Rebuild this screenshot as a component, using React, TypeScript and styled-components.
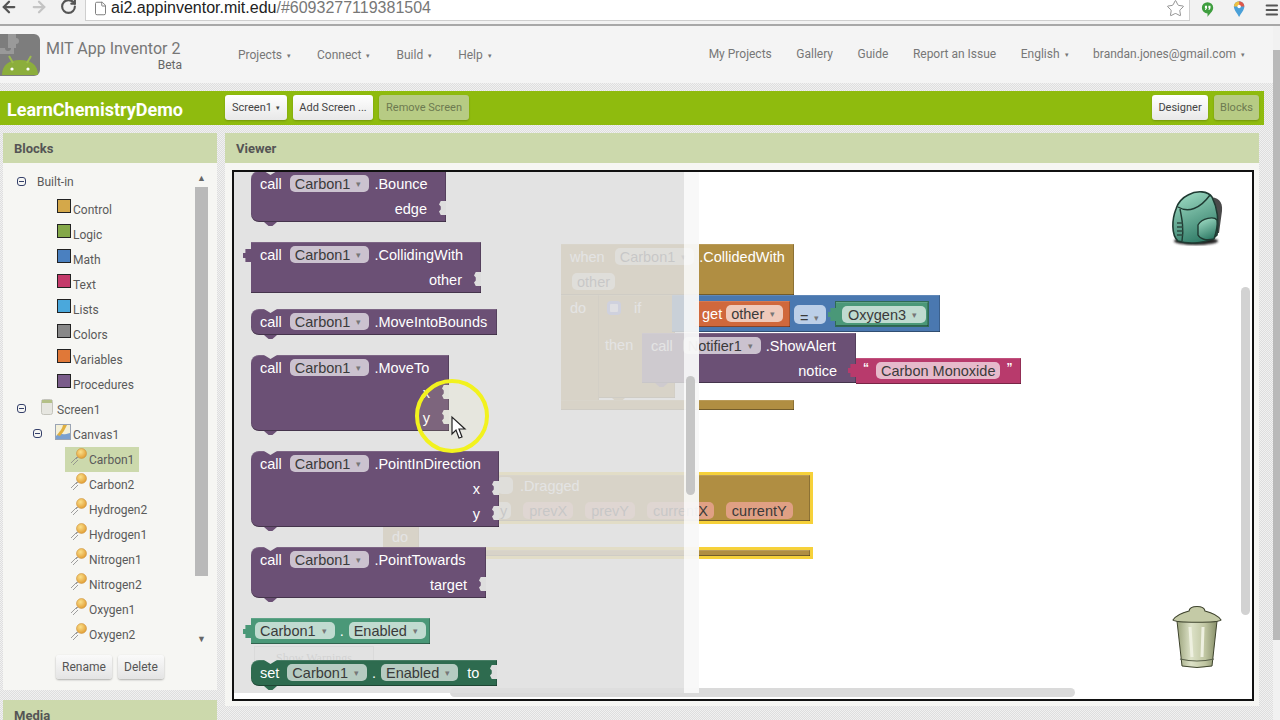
import * as React from "react";
import styled, { createGlobalStyle, css } from "styled-components";
import { ArrowLeft, ArrowRight, File, Menu, RotateCw, Star } from "lucide-react";

const dots = css`
  background: repeating-conic-gradient(#dedede 0 25%, #f1f1f1 0 50%) 0 0 / 2px 2px;
`;

const GlobalStyle = createGlobalStyle`
  html, body {
    margin: 0;
    padding: 0;
    overflow: hidden;
    font-family: Roboto, "Liberation Sans", sans-serif;
  }
`;

const Root = styled.div`
  width: 1280px;
  height: 720px;
  overflow: hidden;
  display: flex;
  flex-direction: column;
`;

/* browser chrome */
const BrowserBar = styled.div`
  height: 26px;
  flex: none;
  box-sizing: border-box;
  display: flex;
  align-items: flex-start;
  overflow: hidden;
  background: #f2f2f2;
  border-bottom: 2px solid #a8a8a8;
`;

const NavIcons = styled.div`
  width: 85px;
  flex: none;
  display: flex;
  gap: 12px;
  margin-top: -2px;
  color: #555;

  svg:nth-child(2) {
    color: #c4c4c4;
  }
`;

const UrlBox = styled.div`
  width: 1105px;
  height: 21px;
  flex: none;
  box-sizing: border-box;
  display: flex;
  align-items: center;
  background: #fff;
  border: 1px solid #cfcfcf;
  border-top: none;
  padding: 0 4px 4px 7px;
  font: 16px/14px "Liberation Sans", Arial, sans-serif;
  color: #222;

  span {
    color: #777;
  }
`;

const PageIcon = styled.div`
  display: flex;
  margin-right: 3px;
  color: #777;
`;

const StarWrap = styled.div`
  display: flex;
  margin-left: auto;
  color: #777;
`;

const ExtIcons = styled.div`
  flex: 1;
  display: flex;
  align-items: center;
  gap: 19px;
  padding-left: 11px;
  overflow: hidden;
`;

const Page = styled.div`
  flex: 1;
  min-height: 0;
  display: flex;
`;

const Content = styled.div`
  width: 1273px;
  flex: none;
  ${dots}
`;

const PageScroll = styled.div`
  width: 7px;
  flex: none;
  background: #f1f1f1;
  padding-top: 24px;
  box-sizing: border-box;

  div {
    height: 590px;
    background: #b9b9b9;
  }
`;

/* top nav */
const Header = styled.div`
  height: 57px;
  display: flex;
  align-items: center;
  background: #f4f4f4;
  margin-bottom: 8px;
  font-size: 12px;
  color: #777;
`;

const Brand = styled.div`
  width: 238px;
  flex: none;
  display: flex;
  align-items: center;
  gap: 6px;
`;

const BrandText = styled.div`
  width: 136px;
  display: flex;
  flex-direction: column;
  font-size: 16px;
  line-height: 18px;
  margin-top: 2px;

  small {
    font-size: 12px;
    line-height: 14px;
    text-align: right;
    color: #666;
  }
`;

const NavGroup = styled.div<{ $right?: boolean }>`
  display: flex;
  gap: ${(p) => (p.$right ? 24.5 : 26)}px;
  ${(p) => (p.$right ? "margin-left: auto; padding-right: 28px; margin-top: -2px;" : "")}
`;

const NavItem = styled.span<{ $menu?: boolean }>`
  white-space: nowrap;
  ${(p) =>
    p.$menu
      ? css`
          &::after {
            content: "▾";
            font-size: 7px;
            margin-left: 5px;
            vertical-align: 1px;
          }
        `
      : ""}
`;

/* green toolbar */
const Toolbar = styled.div`
  width: 1264px;
  height: 34px;
  box-sizing: border-box;
  display: flex;
  align-items: center;
  gap: 6px;
  padding-right: 5px;
  background: #8fbb0e;
  margin-bottom: 8px;
`;

const ProjectName = styled.div`
  width: 212px;
  padding: 2px 0 0 7px;
  flex: none;
  font-size: 18px;
  font-weight: 700;
  color: #fff;
`;

const ToolButton = styled.div<{ $off?: boolean; $w: number; $menu?: boolean }>`
  width: ${(p) => p.$w}px;
  height: 25px;
  margin-top: -1px;
  flex: none;
  box-sizing: border-box;
  display: flex;
  align-items: center;
  justify-content: center;
  border-radius: 3px;
  font-size: 11px;
  color: ${(p) => (p.$off ? "#6d7a50" : "#444")};
  background: ${(p) => (p.$off ? "#b7cb84" : "linear-gradient(#fff, #e8e8e8)")};
  box-shadow: 0 1px 2px rgba(0, 0, 0, 0.2);
  ${(p) =>
    p.$menu
      ? css`
          &::after {
            content: "▾";
            font-size: 7px;
            margin-left: 4px;
          }
        `
      : ""}
`;

const ToolSpacer = styled.div`
  flex: 1;
`;

/* panels */
const Panels = styled.div`
  display: flex;
  gap: 8px;
  padding-left: 3px;
`;

const LeftColumn = styled.div`
  width: 214px;
  flex: none;
  display: flex;
  flex-direction: column;
`;

const PanelTitle = styled.div`
  height: 30px;
  box-sizing: border-box;
  display: flex;
  align-items: center;
  padding-left: 11px;
  background: #ccd9ac;
  font-size: 13px;
  font-weight: 700;
  color: #555;
`;

const BlocksBody = styled.div`
  height: 527px;
  box-sizing: border-box;
  padding-top: 6px;
  background: #f6f6f3;
  display: flex;
  flex-direction: column;
`;

const TreeWrap = styled.div`
  height: 479px;
  flex: none;
  display: flex;
  padding-right: 9px;
`;

const Tree = styled.div`
  flex: 1;
  overflow: hidden;
`;

const TreeRow = styled.div<{ $indent: number; $tall?: boolean }>`
  height: ${(p) => (p.$tall ? 28 : 25)}px;
  display: flex;
  align-items: ${(p) => (p.$tall ? "flex-start" : "center")};
  padding-left: ${(p) => p.$indent}px;
  font-size: 12px;
  color: #5a5a5a;
  white-space: nowrap;
  ${(p) => (p.$tall ? "line-height: 27px;" : "")}
`;

const Toggle = styled.div<{ $gap: number; $top?: number }>`
  width: 9px;
  height: 9px;
  flex: none;
  box-sizing: border-box;
  border: 1px solid #35406a;
  border-radius: 3px;
  margin-right: ${(p) => p.$gap}px;
  margin-top: ${(p) => p.$top ?? 0}px;
  display: flex;
  align-items: center;
  justify-content: center;

  &::after {
    content: "";
    width: 5px;
    height: 1px;
    background: #35406a;
  }
`;

const Swatch = styled.div<{ $c: string }>`
  width: 14px;
  height: 14px;
  flex: none;
  box-sizing: border-box;
  border: 1px solid #222;
  background: ${(p) => p.$c};
  margin: -7px 2px 0 0;
`;

const TreeIcon = styled.svg<{ $gap: number }>`
  flex: none;
  margin-right: ${(p) => p.$gap}px;
  margin-top: -6px;
`;

const BallRow = styled.div<{ $on?: boolean }>`
  height: 25px;
  display: flex;
  align-items: center;
  padding: 0 5px;
  background: ${(p) => (p.$on ? "#ccd9ac" : "transparent")};
`;

const TreeScroll = styled.div`
  width: 13px;
  flex: none;
  display: flex;
  flex-direction: column;
  align-items: center;
  color: #666;
  font-size: 9px;
  line-height: 18px;
`;

const TreeThumb = styled.div`
  width: 13px;
  height: 389px;
  flex: none;
  background: #b9b9b9;
  margin-bottom: 54px;
`;

const BlockButtons = styled.div`
  display: flex;
  justify-content: center;
  gap: 6px;
  margin-top: 7px;
`;

const SmallButton = styled.div<{ $w: number }>`
  width: ${(p) => p.$w}px;
  height: 24px;
  display: flex;
  align-items: center;
  justify-content: center;
  border-radius: 3px;
  font-size: 12px;
  color: #555;
  background: linear-gradient(#fafafa, #e4e4e4);
  box-shadow: 0 1px 2px rgba(0, 0, 0, 0.3);
`;

const MediaPanel = styled.div`
  margin-top: 10px;
`;

const ViewerColumn = styled.div`
  width: 1034px;
  flex: none;
`;

const ViewerBody = styled.div`
  background: #f6f6f3;
  padding: 7px 5px 5px 7px;
`;

/* blocks workspace */
const Workspace = styled.div`
  position: relative;
  width: 1022px;
  height: 531px;
  box-sizing: border-box;
  border: 2px solid #111;
  background: #fff;
  overflow: hidden;
  font: 14.5px "Liberation Sans", Arial, sans-serif;
  color: #fff;
`;

const OX = 234;
const OY = 172;

const Block = styled.div<{
  $x: number;
  $y: number;
  $w: number;
  $h: number;
  $c: string;
  $notch?: boolean;
  $bump?: boolean;
  $selected?: boolean;
  $round?: boolean;
  $outline?: boolean;
}>`
  position: absolute;
  left: ${(p) => p.$x - OX}px;
  top: ${(p) => p.$y - OY}px;
  width: ${(p) => p.$w}px;
  height: ${(p) => p.$h}px;
  box-sizing: border-box;
  background: ${(p) => p.$c};
  box-shadow: inset 0 1px rgba(255, 255, 255, 0.12), inset 0 -1px rgba(0, 0, 0, 0.35),
    inset -1px 0 rgba(0, 0, 0, 0.2);
  ${(p) => (p.$notch ? "border-radius: 8px 0 0 8px;" : "")}
  ${(p) => (p.$round ? "border-radius: 5px; box-shadow: none;" : "")}
  ${(p) => (p.$outline ? "border: 1px solid #2f6a54;" : "")}
  ${(p) => (p.$selected ? "border: 3px solid #f6d13a; & > div:first-child { margin-top: -2px; }" : "")}

  ${(p) =>
    p.$notch
      ? css`
          &::before {
            content: "";
            position: absolute;
            left: 13px;
            top: 0;
            width: 13px;
            height: 4px;
            background: #e3e3e3;
            clip-path: polygon(0 0, 100% 0, 50% 100%);
          }
        `
      : ""}
  ${(p) =>
    p.$bump
      ? css`
          &::after {
            content: "";
            position: absolute;
            left: 13px;
            bottom: -4px;
            width: 13px;
            height: 4px;
            background: ${p.$c};
            clip-path: polygon(0 0, 100% 0, 65% 100%, 35% 100%);
          }
        `
      : ""}
`;

const Plug = styled.div<{ $c: string; $top?: number }>`
  position: absolute;
  left: -8px;
  top: ${(p) => p.$top ?? 7}px;
  width: 8px;
  height: 13px;
  background: ${(p) => p.$c};
  clip-path: polygon(100% 0, 30% 0, 30% 30%, 0 30%, 0 70%, 30% 70%, 30% 100%, 100% 100%);
`;

const Row = styled.div<{ $end?: boolean; $pad?: number; $gap?: number }>`
  position: relative;
  height: 25px;
  display: flex;
  align-items: center;
  gap: ${(p) => p.$gap ?? 5}px;
  white-space: nowrap;
  padding-left: ${(p) => p.$pad ?? 9}px;
  ${(p) => (p.$end ? "justify-content: flex-end; padding-right: 19px;" : "")}
`;

const RowGap = styled.div`
  height: 12px;
`;

const GearBox = styled.span`
  width: 14px;
  height: 14px;
  box-sizing: border-box;
  border: 3px solid #6f7fd8;
  border-radius: 4px;
  background: #dfe3ff;
  margin-right: 8px;
`;

const Word = styled.span<{ $ml?: number; $mr?: number; $dark?: boolean; $quote?: boolean }>`
  margin-left: ${(p) => p.$ml ?? 0}px;
  margin-right: ${(p) => p.$mr ?? 0}px;
  color: ${(p) => (p.$dark ? "#333" : "#fff")};
  ${(p) => (p.$quote ? "font-size: 12px; font-weight: 700; margin-bottom: 6px;" : "")}
`;

const Field = styled.span<{ $bg?: string; $arrow?: boolean; $pad?: number }>`
  height: 17px;
  display: inline-flex;
  align-items: center;
  padding: 0 ${(p) => p.$pad ?? 5}px;
  border-radius: 5px;
  background: ${(p) => p.$bg ?? "rgba(255, 255, 255, 0.65)"};
  color: #3a3a3a;

  ${(p) =>
    p.$arrow
      ? css`
          &::after {
            content: "▾";
            font-size: 9px;
            width: 8px;
            margin-left: 6px;
            color: #777;
          }
        `
      : ""}
`;

const Socket = styled.div`
  position: absolute;
  right: 0;
  top: 5px;
  width: 7px;
  height: 14px;
  background: #dedede;
  clip-path: polygon(25% 0, 100% 0, 100% 100%, 25% 100%, 0 75%, 25% 60%, 25% 40%, 0 25%);
`;

const Flyout = styled.div`
  position: absolute;
  left: 0;
  top: 0;
  width: 450px;
  height: 521px;
  background: rgba(222, 222, 222, 0.86);
`;

const FlyoutGutter = styled.div`
  position: absolute;
  left: 450px;
  top: 0;
  width: 15px;
  height: 521px;
  background: rgba(248, 248, 248, 0.96);
`;

const FlyoutThumb = styled.div`
  position: absolute;
  left: 2px;
  top: 204px;
  width: 9px;
  height: 119px;
  border-radius: 5px;
  background: #c6c6c6;
`;

const ScrollV = styled.div`
  position: absolute;
  right: 2px;
  top: 115px;
  width: 9px;
  height: 328px;
  border-radius: 5px;
  background: #d2d2d2;
`;

const ScrollH = styled.div`
  position: absolute;
  left: 216px;
  bottom: 2px;
  width: 625px;
  height: 9px;
  border-radius: 5px;
  background: #dadada;
`;

const WarnButton = styled.div`
  position: absolute;
  left: 20px;
  top: 474px;
  width: 120px;
  height: 26px;
  box-sizing: border-box;
  border: 1px solid #bbb;
  padding-top: 4px;
  text-align: center;
  font: 12px "Liberation Serif", serif;
  color: #888;
  background: #f3f3f3;
`;

const Floating = styled.svg<{ $x: number; $y: number }>`
  position: absolute;
  left: ${(p) => p.$x - OX}px;
  top: ${(p) => p.$y - OY}px;
`;

const PURPLE = "#6b5075";
const GOLD = "#b08e42";
const BLUE = "#4a78b0";
const ORANGE = "#d0683c";
const TEAL = "#4a9878";
const DARKGREEN = "#2e6b4f";
const PINK = "#b83a6c";
const SALMON = "#e0a084";

const categories: [string, string][] = [
  ["Control", "#d4a84a"],
  ["Logic", "#84a848"],
  ["Math", "#4a80c0"],
  ["Text", "#c43a6a"],
  ["Lists", "#4aa8dc"],
  ["Colors", "#888888"],
  ["Variables", "#e07838"],
  ["Procedures", "#7a5c8a"],
];

const sprites = ["Carbon1", "Carbon2", "Hydrogen2", "Hydrogen1", "Nitrogen1", "Nitrogen2", "Oxygen1", "Oxygen2", ""];

const Ball = ({ id }: { id: string }) => (
  <TreeIcon $gap={1} width="18" height="18" viewBox="0 0 18 18">
    <defs>
      <radialGradient id={id} cx="0.4" cy="0.35" r="0.7">
        <stop offset="0" stopColor="#fbe08a" />
        <stop offset="1" stopColor="#e09a30" />
      </radialGradient>
    </defs>
    <circle cx="11.5" cy="5.5" r="5" fill={`url(#${id})`} stroke="#c88a30" strokeWidth="0.5" />
    <path d="M1 15 L7 9 M3 17 L8 12 M6 11 L8 9" stroke="#888" strokeWidth="0.8" fill="none" />
  </TreeIcon>
);

const CallBlock = ({ x, y, w, method, args, notch, plug, h }: { x: number; y: number; w: number; method: string; args?: string[]; notch?: boolean; plug?: boolean; h?: number }) => (
  <Block $x={x} $y={y} $w={w} $h={h ?? 26 + (args ? args.length * 25 : 0)} $c={PURPLE} $notch={notch} $bump={notch}>
    {plug && <Plug $c={PURPLE} />}
    <Row>
      <Word $mr={3}>call</Word>
      <Field $arrow>Carbon1</Field>
      <Word>{method}</Word>
    </Row>
    {args?.map((a) => (
      <Row key={a} $end>
        {a}
        <Socket />
      </Row>
    ))}
  </Block>
);

const Logo = () => (
  <svg width="40" height="42" viewBox="0 0 40 42">
    <rect x="-6" y="0" width="46" height="42" rx="6" fill="#7d7d7d" />
    <path d="M8 0 H16 V4 a3 3 0 0 1 0 6 V14 H8 Z" fill="#9a9a9a" />
    <path d="M-1 14 H5 a3 3 0 0 0 6 0 H14 V20 H-1 Z" fill="#999" />
    <path d="M2 41 C2 31 9 26 20 26 C31 26 38 31 38 41 Z" fill="#8cae3c" />
    <path d="M9 22 L13 29 M31 22 L27 29" stroke="#9cbc4c" strokeWidth="2" />
    <circle cx="12" cy="35" r="1.6" fill="#fff" />
    <circle cx="28" cy="35" r="1.6" fill="#fff" />
  </svg>
);

const Backpack = () => (
  <Floating $x={1170} $y={189} width="56" height="60" viewBox="0 0 56 60">
    <defs>
      <linearGradient id="pack" x1="0.2" y1="0" x2="0.6" y2="1">
        <stop offset="0" stopColor="#9fdcc4" />
        <stop offset="1" stopColor="#2f7a66" />
      </linearGradient>
      <filter id="packShade">
        <feGaussianBlur stdDeviation="1" />
      </filter>
    </defs>
    <ellipse cx="26" cy="52" rx="22" ry="4" fill="#222" filter="url(#packShade)" />
    <path d="M38 8 C48 8 53 12 52 22 L49 44 L42 44 L44 14 Z" fill="#4a4a4a" />
    <path d="M18 6 C27 1 38 2 42 8 C47 18 49 32 47 46 C40 54 20 56 8 52 C1 46 2 30 6 20 C8 13 12 9 18 6 Z" fill="url(#pack)" stroke="#1f3a32" strokeWidth="1.6" />
    <path d="M8 18 C18 24 30 20 40 6 M10 20 C12 30 14 40 12 52" fill="none" stroke="#1f3a32" strokeWidth="1.4" />
    <path d="M28 36 C32 29 44 27 47 31 C48 38 46 44 44 50 C36 52 30 50 28 46 Z" fill="url(#pack)" stroke="#1f3a32" strokeWidth="1.4" />
    <path d="M7 34 H13 M7 38 H13 M7 42 H13 M7 46 H13" stroke="#2c4a40" strokeWidth="1.6" />
  </Floating>
);

const Trash = () => (
  <Floating $x={1171} $y={603} width="52" height="68" viewBox="0 0 52 68">
    <defs>
      <linearGradient id="can" x1="0" y1="0" x2="1" y2="0">
        <stop offset="0" stopColor="#9aa27a" />
        <stop offset="0.35" stopColor="#dde2c8" />
        <stop offset="0.7" stopColor="#c0c6a2" />
        <stop offset="1" stopColor="#868e68" />
      </linearGradient>
    </defs>
    <path d="M6 18 L11 63 Q26 66 41 63 L46 18 Z" fill="url(#can)" stroke="#3f442e" strokeWidth="1" />
    <path d="M9 56 Q26 60 43 56" fill="none" stroke="#59604a" strokeWidth="1.2" />
    <path d="M2 17 C6 11 14 9 18 8 C19 2 33 2 34 8 C38 9 46 11 50 17 C48 20 4 20 2 17 Z" fill="#c4caa6" stroke="#3f442e" strokeWidth="1.2" />
    <path d="M19 24 L21 54 M32 24 L31 54" stroke="#eef0e0" strokeWidth="3" />
  </Floating>
);

const Cursor = () => (
  <Floating $x={410} $y={376} width="84" height="84" viewBox="0 0 84 84">
    <circle cx="42" cy="40" r="35" fill="rgba(255, 255, 190, 0.12)" stroke="#f2f21e" strokeWidth="4" />
    <path d="M42 41 V58 L46 54 L49 62 L52 61 L49 53 L55 53 Z" fill="#fff" stroke="#222" strokeWidth="1.2" />
  </Floating>
);

export default function App() {
  return (
    <Root>
      <GlobalStyle />
      <BrowserBar>
        <NavIcons>
          <ArrowLeft size={18} strokeWidth={3} />
          <ArrowRight size={18} strokeWidth={3} />
          <RotateCw size={17} strokeWidth={3} />
        </NavIcons>
        <UrlBox>
          <PageIcon>
            <File size={15} strokeWidth={1.5} />
          </PageIcon>
          ai2.appinventor.mit.edu<span>/#6093277119381504</span>
          <StarWrap>
            <Star size={19} strokeWidth={1} />
          </StarWrap>
        </UrlBox>
        <ExtIcons>
          <svg width="15" height="20" viewBox="0 0 15 20">
            <path d="M7.5 1 a6.5 6.5 0 0 1 6.5 6.5 C14 12 9 15 7.5 18 V14 a6.5 6.5 0 0 1 0 -13 Z" fill="#3f9e3f" />
            <path d="M4.5 5 h2.4 v3 l-1.4 2 h-1 l.8 -2 h-.8 Z M8.5 5 h2.4 v3 l-1.4 2 h-1 l.8 -2 h-.8 Z" fill="#fff" />
          </svg>
          <svg width="14" height="20" viewBox="0 0 14 20">
            <path d="M7 0 a6 6 0 0 1 6 6 C13 10 9 14 7 18 C5 14 1 10 1 6 a6 6 0 0 1 6 -6 Z" fill="#4aa0d8" />
            <path d="M7 0 a6 6 0 0 1 6 6 L7 6 Z" fill="#e0584a" />
            <path d="M1 6 a6 6 0 0 1 6 -6 V6 Z" fill="#f0c040" />
            <circle cx="7" cy="6" r="2" fill="#fff" />
          </svg>
          <Menu size={18} strokeWidth={3} color="#555" />
        </ExtIcons>
      </BrowserBar>
      <Page>
        <Content>
          <Header>
            <Brand>
              <Logo />
              <BrandText>
                MIT App Inventor 2<small>Beta</small>
              </BrandText>
            </Brand>
            <NavGroup>
              <NavItem $menu>Projects</NavItem>
              <NavItem $menu>Connect</NavItem>
              <NavItem $menu>Build</NavItem>
              <NavItem $menu>Help</NavItem>
            </NavGroup>
            <NavGroup $right>
              <NavItem>My Projects</NavItem>
              <NavItem>Gallery</NavItem>
              <NavItem>Guide</NavItem>
              <NavItem>Report an Issue</NavItem>
              <NavItem $menu>English</NavItem>
              <NavItem $menu>brandan.jones@gmail.com</NavItem>
            </NavGroup>
          </Header>
          <Toolbar>
            <ProjectName>LearnChemistryDemo</ProjectName>
            <ToolButton $w={62} $menu>
              Screen1
            </ToolButton>
            <ToolButton $w={80}>Add Screen ...</ToolButton>
            <ToolButton $w={90} $off>
              Remove Screen
            </ToolButton>
            <ToolSpacer />
            <ToolButton $w={56}>Designer</ToolButton>
            <ToolButton $w={45} $off>
              Blocks
            </ToolButton>
          </Toolbar>
          <Panels>
            <LeftColumn>
              <PanelTitle>Blocks</PanelTitle>
              <BlocksBody>
                <TreeWrap>
                  <Tree>
                    <TreeRow $indent={14} $tall>
                      <Toggle $gap={11} $top={8} />
                      Built-in
                    </TreeRow>
                    {categories.map(([name, color]) => (
                      <TreeRow key={name} $indent={54}>
                        <Swatch $c={color} />
                        {name}
                      </TreeRow>
                    ))}
                    <TreeRow $indent={14}>
                      <Toggle $gap={15} $top={-3} />
                      <TreeIcon $gap={4} width="12" height="16" viewBox="0 0 12 16">
                        <rect x="0.5" y="0.5" width="11" height="15" rx="2" fill="#e6e6e0" stroke="#c4c4bc" />
                        <rect x="1" y="1" width="10" height="3" fill="#b4c088" />
                      </TreeIcon>
                      Screen1
                    </TreeRow>
                    <TreeRow $indent={30}>
                      <Toggle $gap={13} $top={-3} />
                      <TreeIcon $gap={2} width="16" height="16" viewBox="0 0 16 16">
                        <rect x="0.5" y="0.5" width="15" height="15" fill="#f4f0d8" stroke="#9aa4b4" />
                        <path d="M1 12 C5 8 7 12 15 9 V15 H1 Z" fill="#7aa0d0" />
                        <path d="M8 1 C7 6 4 8 2 11 L5 12 C8 9 10 5 12 1 Z" fill="#e0b040" />
                      </TreeIcon>
                      Canvas1
                    </TreeRow>
                    {sprites.map((s, i) => (
                      <TreeRow key={i} $indent={62}>
                        <BallRow $on={i === 0}>
                          <Ball id={`ball${i}`} />
                          {s}
                        </BallRow>
                      </TreeRow>
                    ))}
                  </Tree>
                  <TreeScroll>
                    ▲
                    <TreeThumb />
                    ▼
                  </TreeScroll>
                </TreeWrap>
                <BlockButtons>
                  <SmallButton $w={56}>Rename</SmallButton>
                  <SmallButton $w={46}>Delete</SmallButton>
                </BlockButtons>
              </BlocksBody>
              <MediaPanel>
                <PanelTitle>Media</PanelTitle>
              </MediaPanel>
            </LeftColumn>
            <ViewerColumn>
              <PanelTitle>Viewer</PanelTitle>
              <ViewerBody>
                <Workspace>
                  {/* blocks on the canvas, the flyout covers part of them */}
                  <Block $x={561} $y={244} $w={233} $h={51} $c={GOLD}>
                    <Row>
                      <Word $mr={5}>when</Word>
                      <Field $arrow>Carbon1</Field>
                      <Word>.CollidedWith</Word>
                    </Row>
                    <Row $pad={11}>
                      <Field>other</Field>
                    </Row>
                  </Block>
                  <Block $x={561} $y={295} $w={38} $h={106} $c={GOLD}>
                    <Row>do</Row>
                  </Block>
                  <Block $x={599} $y={295} $w={76} $h={103} $c={GOLD} $bump>
                    <Row $pad={8}>
                      <GearBox />
                      if
                    </Row>
                    <RowGap />
                    <Row $pad={6}>then</Row>
                  </Block>
                  <Block $x={672} $y={295} $w={268} $h={37} $c={BLUE} />
                  <Block $x={695} $y={301} $w={95} $h={26} $c={ORANGE}>
                    <Row $pad={7}>
                      <Word $mr={-1}>get</Word>
                      <Field $arrow>other</Field>
                    </Row>
                  </Block>
                  <Block $x={794} $y={305} $w={32} $h={19} $c="#bccfe8" $round>
                    <Row $pad={6}>
                      <Field $arrow $bg="transparent" $pad={0}>
                        =
                      </Field>
                    </Row>
                  </Block>
                  <Block $x={835} $y={301} $w={94} $h={26} $c={TEAL} $outline>
                    <Plug $c={TEAL} $top={6} />
                    <Row $pad={6}>
                      <Field $arrow $pad={6}>
                        Oxygen3
                      </Field>
                    </Row>
                  </Block>
                  <Block $x={642} $y={333} $w={214} $h={50} $c={PURPLE} $bump>
                    <Row>
                      <Word $mr={5}>call</Word>
                      <Field $arrow>Notifier1</Field>
                      <Word>.ShowAlert</Word>
                    </Row>
                    <Row $end>notice</Row>
                  </Block>
                  <Block $x={856} $y={358} $w={165} $h={26} $c={PINK}>
                    <Plug $c={PINK} $top={6} />
                    <Row $pad={7}>
                      <Word $quote $mr={2}>
                        “
                      </Word>
                      <Field>Carbon Monoxide</Field>
                      <Word $quote $ml={1}>
                        ”
                      </Word>
                    </Row>
                  </Block>
                  <Block $x={561} $y={400} $w={233} $h={10} $c={GOLD} />

                  <Block $x={383} $y={472} $w={430} $h={52} $c={GOLD} $selected>
                    <Row $pad={111}>
                      <Field $pad={8}> </Field>
                      <Word $ml={2}>.Dragged</Word>
                    </Row>
                    <Row $pad={110} $gap={12}>
                      <Field $pad={4}>y</Field>
                      <Field $pad={6} $bg={SALMON}>
                        prevX
                      </Field>
                      <Field $pad={6} $bg={SALMON}>
                        prevY
                      </Field>
                      <Field $pad={6} $bg={SALMON}>
                        currentX
                      </Field>
                      <Field $pad={6} $bg={SALMON}>
                        currentY
                      </Field>
                    </Row>
                  </Block>
                  <Block $x={383} $y={524} $w={36} $h={25} $c={GOLD}>
                    <Row>do</Row>
                  </Block>
                  <Block $x={383} $y={547} $w={430} $h={12} $c={GOLD} $selected />
                  <WarnButton>Show Warnings</WarnButton>
                  <Backpack />
                  <Trash />
                  <ScrollV />
                  <ScrollH />

                  <Flyout />
                  <FlyoutGutter>
                    <FlyoutThumb />
                  </FlyoutGutter>

                  <CallBlock x={251} y={171} w={195} h={51} method=".Bounce" args={["edge"]} notch />
                  <CallBlock x={251} y={242} w={230} method=".CollidingWith" args={["other"]} plug />
                  <CallBlock x={251} y={309} w={246} method=".MoveIntoBounds" notch />
                  <CallBlock x={251} y={355} w={198} method=".MoveTo" args={["x", "y"]} notch />
                  <CallBlock x={251} y={451} w={248} method=".PointInDirection" args={["x", "y"]} notch />
                  <CallBlock x={251} y={547} w={235} method=".PointTowards" args={["target"]} notch />
                  <Block $x={251} $y={618} $w={179} $h={26} $c={TEAL}>
                    <Plug $c={TEAL} $top={7} />
                    <Row $pad={4}>
                      <Field $arrow>Carbon1</Field>
                      <Word>.</Word>
                      <Field $arrow>Enabled</Field>
                    </Row>
                  </Block>
                  <Block $x={251} $y={660} $w={246} $h={26} $c={DARKGREEN} $notch $bump>
                    <Row>
                      <Word $mr={3}>set</Word>
                      <Field $arrow>Carbon1</Field>
                      <Word>.</Word>
                      <Field $arrow>Enabled</Field>
                      <Word $ml={4}>to</Word>
                      <Socket />
                    </Row>
                  </Block>
                  <Cursor />
                </Workspace>
              </ViewerBody>
            </ViewerColumn>
          </Panels>
        </Content>
        <PageScroll>
          <div />
        </PageScroll>
      </Page>
    </Root>
  );
}
